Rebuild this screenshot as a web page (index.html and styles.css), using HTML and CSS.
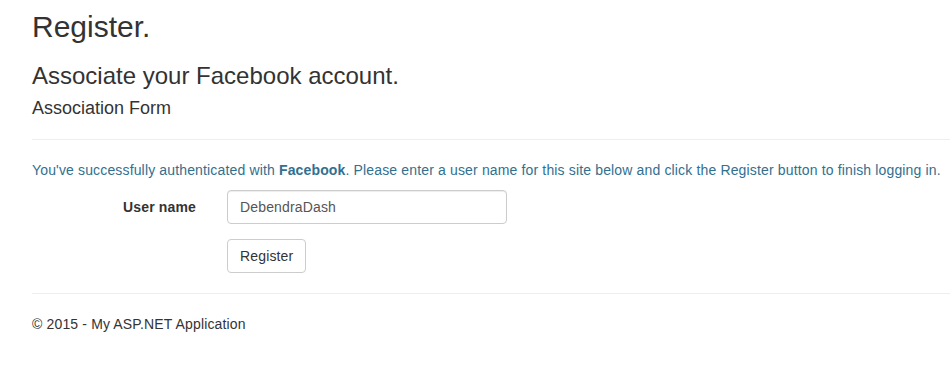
FILE: index.html
```html
<!DOCTYPE html>
<html lang="en">
<head>
    <meta charset="UTF-8">
    <meta name="viewport" content="width=device-width, initial-scale=1.0">
    <title>Register - My ASP.NET Application</title>
    <link rel="stylesheet" href="styles.css">
</head>
<body>

<div class="body-content">
    <h2>Register.</h2>
    <h3>Associate your Facebook account.</h3>

    <form class="form-horizontal">
        <h4>Association Form</h4>
        <hr>
        <p class="text-info">
            You've successfully authenticated with <strong>Facebook</strong>.
            Please enter a user name for this site below and click the Register button to finish
            logging in.
        </p>

        <div class="form-group">
            <label class="control-label" for="UserName">User name</label>
            <div class="field">
                <input type="text" id="UserName" class="form-control" value="DebendraDash">
            </div>
        </div>

        <div class="form-group last">
            <div class="field offset">
                <button type="button" class="btn btn-default">Register</button>
            </div>
        </div>
    </form>

    <hr>
    <footer>
        <p>&copy; 2015 - My ASP.NET Application</p>
    </footer>
</div>

</body>
</html>
```

FILE: styles.css
```css
html, body {
    margin: 0;
    padding: 0;
    overflow: hidden;
}

body {
    font-family: "Liberation Sans", Arial, Helvetica, sans-serif;
    font-size: 14px;
    line-height: 1.42857143;
    letter-spacing: 0.15px;
    color: #333;
    background-color: #fff;
}

.body-content {
    padding: 0 0 0 32px;
}

h2, h3, h4 {
    font-weight: 500;
    line-height: 1.1;
    letter-spacing: 0;
    color: inherit;
}

h2 {
    font-size: 30px;
    margin: 10px 0 10px;
}

h3 {
    font-size: 24px;
    margin: 20px 0 10px;
}

h4 {
    font-size: 18px;
    margin: 10px 0 10px;
}

hr {
    margin: 20px 0;
    border: 0;
    border-top: 1px solid #eee;
}

p {
    margin: 0 0 10px;
}

.text-info {
    color: #31708f;
    white-space: nowrap;
}

.form-group {
    display: flex;
    margin-bottom: 15px;
}

.form-group.last {
    margin-bottom: 0;
}

.control-label {
    width: 195px;
    padding-top: 7px;
    padding-right: 31px;
    font-weight: bold;
    text-align: right;
    box-sizing: border-box;
    flex-shrink: 0;
}

.field {
    width: 280px;
}

.field.offset {
    margin-left: 195px;
}

.form-control {
    display: block;
    width: 100%;
    max-width: 280px;
    height: 34px;
    padding: 6px 12px;
    font-family: inherit;
    font-size: 14px;
    line-height: 1.42857143;
    letter-spacing: inherit;
    color: #555;
    background-color: #fff;
    border: 1px solid #ccc;
    border-radius: 4px;
    box-shadow: inset 0 1px 1px rgba(0, 0, 0, 0.075);
    box-sizing: border-box;
}

.btn {
    display: inline-block;
    padding: 6px 12px;
    font-family: inherit;
    font-size: 14px;
    line-height: 1.42857143;
    letter-spacing: inherit;
    text-align: center;
    border: 1px solid transparent;
    border-radius: 4px;
    cursor: pointer;
}

.btn-default {
    color: #333;
    background-color: #fff;
    border-color: #ccc;
}

.btn-default:hover {
    background-color: #e6e6e6;
    border-color: #adadad;
}

footer p {
    margin: 0;
}
```
